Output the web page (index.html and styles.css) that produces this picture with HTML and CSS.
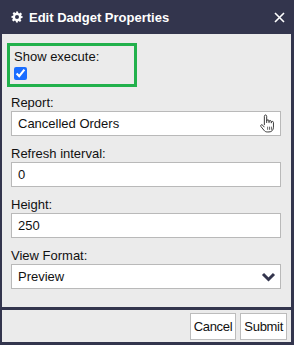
FILE: index.html
```html
<!DOCTYPE html>
<html lang="en">
<head>
    <meta charset="utf-8">
    <title>Edit Dadget Properties</title>
    <link rel="stylesheet" href="styles.css">
</head>
<body>

<div class="dialog">
    <div class="header">
        <svg class="gear" width="12" height="12" viewBox="0 0 24 24">
            <path fill="#fff" fill-rule="evenodd" d="M10 1h4l.6 3.2 1.9.8 2.7-1.8 2.8 2.8-1.8 2.7.8 1.9L23 10v4l-3.2.6-.8 1.9 1.8 2.7-2.8 2.8-2.7-1.8-1.9.8L14 23h-4l-.6-3.2-1.9-.8-2.7 1.8-2.8-2.8 1.8-2.7-.8-1.9L1 14v-4l3.2-.6.8-1.9-1.8-2.7 2.8-2.8 2.7 1.8 1.9-.8zM12 8a4 4 0 1 0 0 8 4 4 0 1 0 0-8z"/>
        </svg>
        <span class="title">Edit Dadget Properties</span>
        <svg class="close" width="11" height="11" viewBox="0 0 11 11">
            <path d="M1 1L10 10M10 1L1 10" stroke="#fff" stroke-width="1.6"/>
        </svg>
    </div>

    <div class="content">
        <div class="highlight">
            <label for="execute">Show execute:</label>
            <input type="checkbox" id="execute" checked>
        </div>

        <div class="field">
            <label>Report:</label>
            <div class="box">
                <span class="value">Cancelled Orders</span>
                <svg class="hand" width="16" height="19" viewBox="0 0 14 18">
                    <path d="M4.5 10.5V2.2c0-.8.5-1.3 1.1-1.3s1.1.5 1.1 1.3V8.5M6.7 6.6c0-.7.5-1.1 1.1-1.1s1.1.4 1.1 1.1v2M8.9 7.3c0-.7.5-1.1 1.1-1.1s1.1.4 1.1 1.1v1.4M11.1 8c0-.6.4-1 1-1s1 .4 1 1v4.5c0 2.6-1.6 4.5-4.2 4.5H7.2c-1.4 0-2.3-.6-3.1-1.6L1.2 11.8c-.4-.6-.2-1.2.3-1.5.5-.3 1.1-.1 1.5.4l1.5 1.8" fill="#fff" stroke="#333" stroke-width="0.9" stroke-linejoin="round"/>
                    <path d="M7.6 12v3M9.4 12v3M11.2 12v3" stroke="#333" stroke-width="0.7"/>
                </svg>
            </div>
        </div>

        <div class="field">
            <label for="refresh">Refresh interval:</label>
            <input type="text" id="refresh" value="0">
        </div>

        <div class="field">
            <label for="height">Height:</label>
            <input type="text" id="height" value="250">
        </div>

        <div class="field">
            <label>View Format:</label>
            <div class="box">
                <span class="value">Preview</span>
                <svg class="chevron" width="15" height="10" viewBox="0 0 15 10">
                    <path d="M2 2l5.5 5.5L13 2" fill="none" stroke="#33354d" stroke-width="3"/>
                </svg>
            </div>
        </div>
    </div>

    <div class="footer">
        <button type="button">Cancel</button>
        <button type="button">Submit</button>
    </div>
</div>

</body>
</html>
```

FILE: styles.css
```css
body {
    margin: 0;
    background-color: #33354d;
    font-family: 'Liberation Sans', Arial, sans-serif;
    font-size: 13px;
    color: #111;
}
.dialog {
    height: 345px;
    display: flex;
    flex-direction: column;
    padding-bottom: 3px;
    box-sizing: border-box;
}
.header {
    height: 34px;
    display: flex;
    align-items: center;
    padding: 0 9px 0 11px;
    color: #fff;
}
.gear {
    margin-right: 6px;
}
.title {
    flex: 1;
    font-weight: bold;
    font-size: 13px;
}
.content {
    flex: 1;
    margin: 0 3px 0 2px;
    padding: 9px 10px 0 9px;
    background-color: #ebebeb;
}
.highlight {
    width: 130px;
    height: 44px;
    box-sizing: border-box;
    margin-left: -4px;
    border: 3px solid #22b14c;
    padding: 3px 4px 0;
}
.highlight label {
    display: block;
    line-height: 15px;
}
.highlight input {
    display: block;
    margin: 3px 0 0;
    width: 13px;
    height: 13px;
    accent-color: #1a6dff;
}
.field {
    margin-top: 8px;
}
.field + .field {
    margin-top: 10px;
}
.field label {
    display: block;
    line-height: 15px;
    margin-bottom: 1px;
}
.field input,
.box {
    display: flex;
    align-items: center;
    width: 100%;
    height: 25px;
    box-sizing: border-box;
    margin: 0;
    padding: 0 6px;
    border: 1px solid #b9b9b9;
    border-radius: 0;
    background-color: #fff;
    font-family: inherit;
    font-size: 13px;
    color: #111;
}
.value {
    flex: 1;
}
.hand {
    margin-right: -1px;
}
.chevron {
    margin-right: -2px;
}
.footer {
    height: 32px;
    margin: 3px 3px 0 2px;
    background-color: #ebebeb;
    display: flex;
    justify-content: flex-end;
    align-items: flex-start;
    gap: 4px;
    padding: 3px 4px 0 0;
    box-sizing: border-box;
}
.footer button {
    height: 27px;
    padding: 0 3px;
    background-color: #fff;
    border: 1px solid #bcbcbc;
    border-radius: 0;
    font-family: inherit;
    font-size: 13px;
    letter-spacing: -0.3px;
    color: #111;
}
```
